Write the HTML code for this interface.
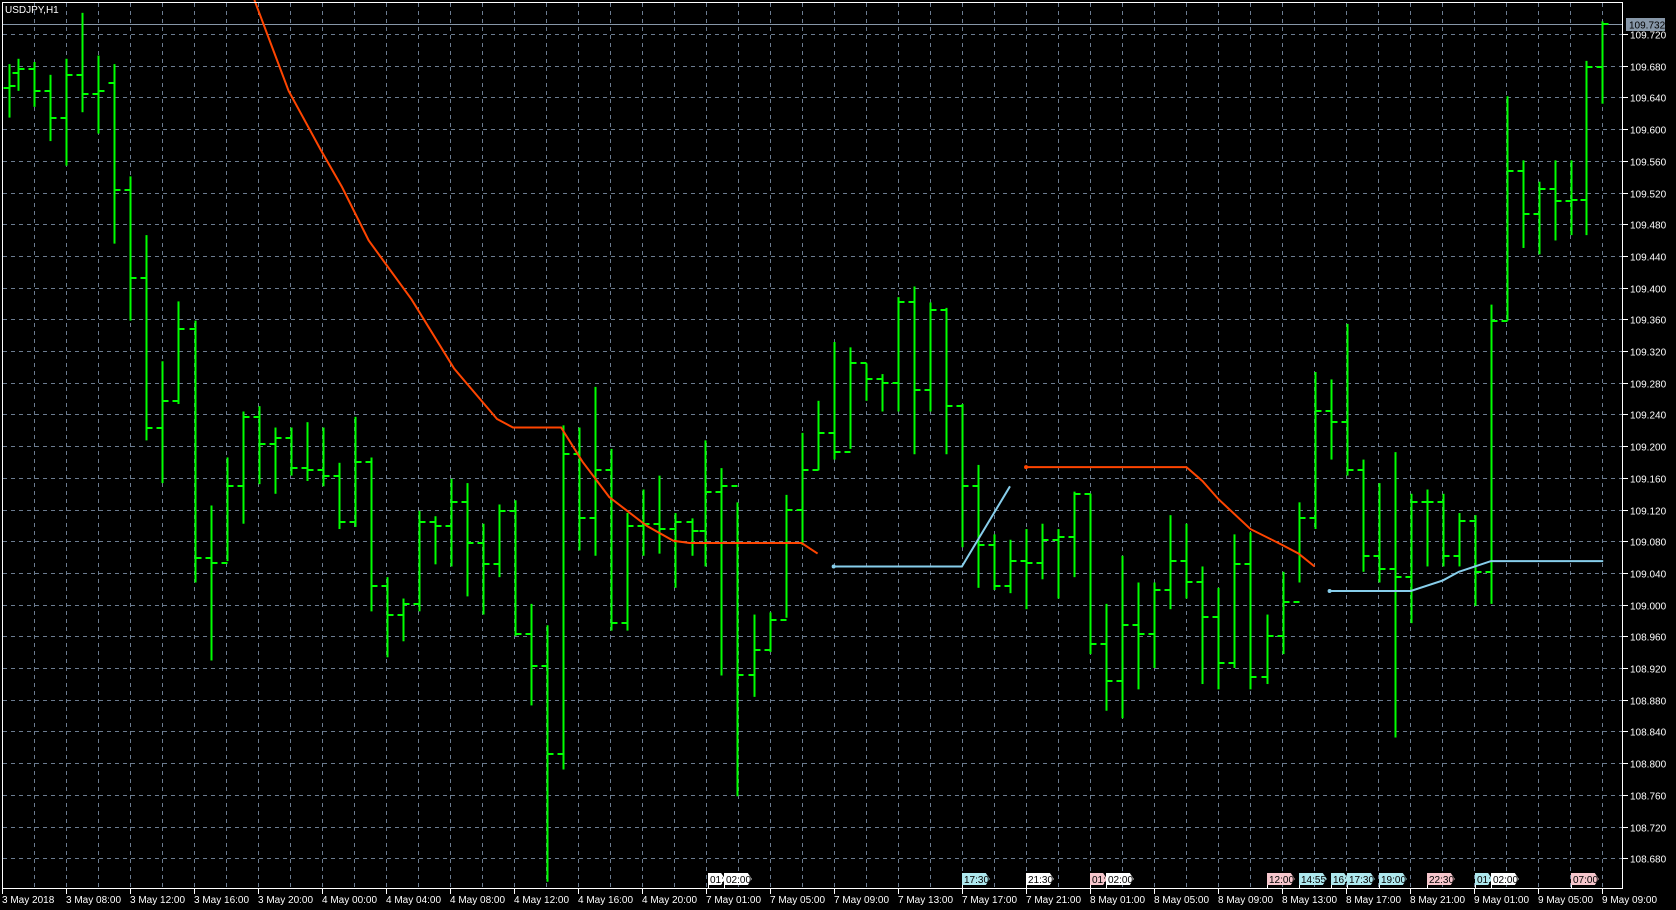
<!DOCTYPE html>
<html><head><meta charset="utf-8"><style>
html,body{margin:0;padding:0;background:#000;width:1676px;height:910px;overflow:hidden}
svg{display:block}
text{font-family:"Liberation Sans",sans-serif;font-size:10px;fill:#fff}
</style></head><body>
<svg id="s" width="1676" height="910" xmlns="http://www.w3.org/2000/svg"></svg>
<script>
const S=1.0688,svg=document.getElementById('s');
let h='';
for(let x=34;x<1623;x+=32)h+=`<line x1="${x+.5}" y1="3" x2="${x+.5}" y2="889" stroke="#6c7c90" stroke-dasharray="4,4"/>`;
for(let k=0;k<=26;k++){let y=Math.round(34+k*31.7)+.5;h+=`<line x1="3" y1="${y}" x2="1623" y2="${y}" stroke="#6c7c90" stroke-dasharray="4,4"/>`;
let p=(109.72-k*0.04).toFixed(3);h+=`<line x1="1623" y1="${y}" x2="1628" y2="${y}" stroke="#fff"/><text x="1630" y="${y+4}">${p}</text>`;}
h+=`<line x1="3" y1="24.5" x2="1623" y2="24.5" stroke="#8797a8"/>`;
h+=`<rect x="1626" y="18" width="39" height="13" fill="#8797a8"/><text x="1629" y="28.5" style="fill:#000">109.732</text>`;
const B=[[8,60,110,82,80],[17,55,85,68,65],[32,58,100,65,85],[47,70,132,85,110],[62,55,155,110,70],[77,12,105,70,88],[92,52,125,88,85],[107,60,228,78,178],[122,165,300,178,260],[137,220,412,260,400],[152,338,452,400,375],[167,282,378,375,308],[182,300,545,308,522],[197,473,618,522,527],[212,428,525,527,455],[227,385,490,455,390],[242,380,453,390,415],[257,400,462,415,410],[272,400,445,410,438],[287,395,450,438,440],[302,400,455,440,445],[317,433,495,445,488],[332,390,493,488,432],[347,428,572,432,548],[362,540,615,548,575],[377,560,600,575,565],[392,478,572,565,488],[407,483,528,488,492],[422,448,530,492,470],[437,452,558,470,508],[452,490,575,508,528],[467,472,540,528,478],[482,468,595,478,593],[497,565,660,593,623],[512,585,825,623,705],[527,398,720,705,425],[542,400,515,425,485],[557,362,520,485,440],[572,420,590,440,583],[587,480,590,583,492],[602,458,520,492,490],[617,445,518,490,495],[632,480,550,495,488],[647,485,520,488,497],[660,412,530,497,460],[675,438,632,460,455],[690,470,745,455,632],[705,575,652,632,608],[720,573,610,608,580],[735,463,578,580,477],[750,405,510,477,440],[765,375,440,440,405],[780,320,430,405,423],[795,325,420,423,340],[810,340,375,340,355],[825,350,385,355,358],[840,278,385,358,283],[855,268,425,283,365],[870,283,385,365,290],[885,288,425,290,380],[900,378,512,380,455],[915,435,550,455,510],[930,500,552,510,548],[945,505,555,548,525],[960,495,570,525,527],[975,490,542,527,505],[990,495,560,505,502],[1005,460,540,502,462],[1020,462,612,462,603],[1035,565,665,603,637],[1050,520,672,637,585],[1065,545,645,585,593],[1080,545,625,593,552],[1095,482,570,552,525],[1110,490,560,525,545],[1125,530,640,545,577],[1140,550,645,577,620],[1155,500,625,620,528],[1170,498,645,528,633],[1185,575,640,633,595],[1200,535,612,595,563],[1215,470,545,563,485],[1230,348,495,485,385],[1245,355,430,385,395],[1260,303,445,395,440],[1275,430,535,440,520],[1290,452,545,520,532],[1305,423,690,532,540],[1320,462,583,540,470],[1335,458,530,470,470],[1350,462,530,470,520],[1365,480,530,520,487],[1380,482,567,487,535],[1395,285,565,535,300],[1410,90,300,300,160],[1425,150,232,160,200],[1440,170,238,200,177],[1455,150,225,177,188],[1470,150,220,188,187],[1484,57,220,187,63],[1499,20,97,63,22]];
for(const [x,a,b,o,c] of B){let X=Math.round(x*S)+.5;
h+=`<line x1="${X}" y1="${a*S}" x2="${X}" y2="${b*S}" stroke="#00ff00" stroke-width="2"/>`;
h+=`<line x1="${X-6}" y1="${Math.round(o*S)}" x2="${X}" y2="${Math.round(o*S)}" stroke="#00ff00" stroke-width="2"/>`;
h+=`<line x1="${X}" y1="${Math.round(c*S)}" x2="${X+6}" y2="${Math.round(c*S)}" stroke="#00ff00" stroke-width="2"/>`;}
function pl(pts,col){return `<polyline fill="none" stroke="${col}" stroke-width="2" points="${pts.map(p=>(p[0]*S).toFixed(1)+','+(p[1]*S).toFixed(1)).join(' ')}"/>`}
const R='#ff4500',C='#87ceeb';
h+=pl([[238,0],[255,45],[270,85],[300,140],[320,175],[345,225],[385,280],[425,345],[465,392],[480,400],[525,400],[545,432],[570,465],[605,492],[630,506],[645,508],[750,508],[765,518]],R);
h+=pl([[960,437],[1110,437],[1125,450],[1140,467],[1170,495],[1200,510],[1215,518],[1230,530]],R);
h+=`<circle cx="${960*S}" cy="${437*S}" r="2" fill="${R}"/>`;
h+=pl([[780,530],[900,530],[945,455]],C);
h+=pl([[1244,553],[1320,553],[1350,543],[1365,535],[1395,525],[1500,525]],C);
h+=`<circle cx="${780*S}" cy="${530*S}" r="2" fill="${C}"/><circle cx="${1244*S}" cy="${553*S}" r="2" fill="${C}"/>`;
const T=[[662,'01:','#fff',16],[677,'02:00','#fff',26],[900,'17:30','#aee8ee',26],[960,'21:30','#fff',26],[1020,'01:','#f6c6cc',16],[1035,'02:00','#fff',26],[1185,'12:00','#f6c6cc',26],[1215,'14:55','#aee8ee',26],[1245,'16:','#aee8ee',16],[1260,'17:30','#aee8ee',26],[1290,'19:00','#aee8ee',26],[1335,'22:30','#f6c6cc',26],[1380,'01:','#aee8ee',16],[1395,'02:00','#fff',26],[1470,'07:00','#f6c6cc',26]];
for(const [x,t,col,w] of T){let X=Math.round(x*S);let W=w*S;
h+=`<line x1="${X+.5}" y1="874" x2="${X+.5}" y2="889" stroke="#fff"/>`;
h+=`<path d="M${X} 873 h${W-4} l4 6 l-4 6 h${-(W-4)} z" fill="${col}"/><text x="${X+2}" y="883" style="fill:#000">${t}</text>`;}
h+=`<rect x="2.5" y="2.5" width="1620" height="886" fill="none" stroke="#fff"/>`;
const L=['3 May 2018','3 May 08:00','3 May 12:00','3 May 16:00','3 May 20:00','4 May 00:00','4 May 04:00','4 May 08:00','4 May 12:00','4 May 16:00','4 May 20:00','7 May 01:00','7 May 05:00','7 May 09:00','7 May 13:00','7 May 17:00','7 May 21:00','8 May 01:00','8 May 05:00','8 May 09:00','8 May 13:00','8 May 17:00','8 May 21:00','9 May 01:00','9 May 05:00','9 May 09:00'];
L.forEach((t,i)=>{let x=2+i*64;h+=`<line x1="${x+.5}" y1="889" x2="${x+.5}" y2="894" stroke="#fff"/><text x="${x}" y="903">${t}</text>`;});
h+=`<text x="5" y="13">USDJPY,H1</text>`;
svg.innerHTML=h;
</script>
</body></html>
